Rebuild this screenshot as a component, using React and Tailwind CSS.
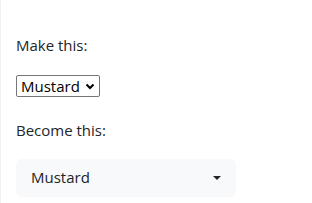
import React from 'react';

const App = () => {
    return (
        <div className="min-h-[203px] bg-white border-l border-[#f0f0f0] pl-[15px] pt-[33px] text-[#212529] font-['Open_Sans',sans-serif]">
            {/* native select */}
            <p className="text-[15px] leading-6">Make this:</p>
            <div className="mt-[18px] inline-flex items-center h-[22px] border border-[#767676] rounded-[2px] pl-[4px] pr-[3px] bg-white text-black">
                <span className="text-[15px] leading-none">Mustard</span>
                <svg width="12" height="12" viewBox="0 0 12 12" className="ml-[4px]">
                    <path d="M2.5 4.5 L6 8 L9.5 4.5" fill="none" stroke="#000" strokeWidth="2" />
                </svg>
            </div>

            {/* styled select */}
            <p className="mt-[20px] text-[15px] leading-6">Become this:</p>
            <div className="mt-[17px] w-[220px] h-[38px] bg-[#f8f9fa] rounded-md flex items-center justify-between pl-[15px] pr-[14px]">
                <span className="text-[15px]">Mustard</span>
                <svg width="10" height="6" viewBox="0 0 10 6">
                    <path d="M1 1 L9 1 L5 5 Z" fill="#212529" />
                </svg>
            </div>
        </div>
    );
};

export default App;
